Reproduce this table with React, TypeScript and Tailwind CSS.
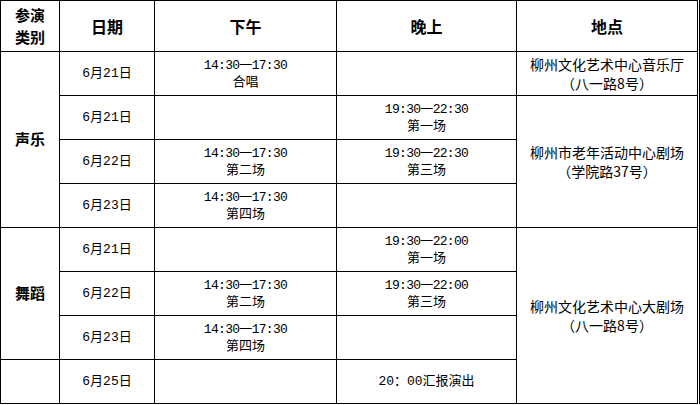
import React from "react";

const cjk = "font-['Liberation_Mono','Noto_Sans_CJK_SC',sans-serif]";

type Row = {
  group?: { label: string; span: number } | "empty";
  date: string;
  afternoon?: string[];
  evening?: string[];
  place?: { lines: string[]; span: number };
};

const rows: Row[] = [
  {
    group: { label: "声乐", span: 4 },
    date: "6月21日",
    afternoon: ["14:30一17:30", "合唱"],
    place: { lines: ["柳州文化艺术中心音乐厅", "（八一路8号）"], span: 1 },
  },
  {
    date: "6月21日",
    evening: ["19:30一22:30", "第一场"],
    place: { lines: ["柳州市老年活动中心剧场", "（学院路37号）"], span: 3 },
  },
  {
    date: "6月22日",
    afternoon: ["14:30一17:30", "第二场"],
    evening: ["19:30一22:30", "第三场"],
  },
  {
    date: "6月23日",
    afternoon: ["14:30一17:30", "第四场"],
  },
  {
    group: { label: "舞蹈", span: 3 },
    date: "6月21日",
    evening: ["19:30一22:00", "第一场"],
    place: { lines: ["柳州文化艺术中心大剧场", "（八一路8号）"], span: 4 },
  },
  {
    date: "6月22日",
    afternoon: ["14:30一17:30", "第二场"],
    evening: ["19:30一22:00", "第三场"],
  },
  {
    date: "6月23日",
    afternoon: ["14:30一17:30", "第四场"],
  },
  {
    group: "empty",
    date: "6月25日",
    evening: ["20：00汇报演出"],
  },
];

const cell = "border border-black text-center align-middle p-0";

// time lines get squeezed a bit, the mono digits run wider than the original
const Lines = ({ lines }: { lines?: string[] }) =>
  lines ? (
    <div className="leading-[17px]">
      {lines.map((l, i) => (
        <div key={l} className={i === 0 && l.includes(":") ? "tracking-[-0.7px]" : ""}>
          {l}
        </div>
      ))}
    </div>
  ) : null;

export default function App() {
  return (
    <div className={`w-[700px] h-[405px] bg-white overflow-hidden text-black ${cjk}`}>
      <div className="inline-block border-r border-black pr-[1px]">
        <table className="table-fixed border-collapse w-[697px]">
          <colgroup>
            <col className="w-[59px]" />
            <col className="w-[95px]" />
            <col className="w-[182px]" />
            <col className="w-[180px]" />
            <col className="w-[181px]" />
          </colgroup>
          <thead>
            <tr className="h-[51px] text-[16px] font-bold font-['Noto_Sans_CJK_SC',sans-serif]">
              <th className={cell}>
                <div className="text-[15px] leading-[22px]">
                  <div>参演</div>
                  <div>类别</div>
                </div>
              </th>
              <th className={cell}>日期</th>
              <th className={cell}>下午</th>
              <th className={cell}>晚上</th>
              <th className={cell}>地点</th>
            </tr>
          </thead>
          <tbody className="text-[13px]">
            {rows.map((r, i) => (
              <tr key={i} className="h-[44px]">
                {r.group === "empty" ? (
                  <td className={cell}></td>
                ) : r.group ? (
                  <td
                    rowSpan={r.group.span}
                    className={`${cell} text-[15px] font-bold font-['Noto_Sans_CJK_SC',sans-serif]`}
                  >
                    {r.group.label}
                  </td>
                ) : null}
                <td className={cell}>{r.date}</td>
                <td className={cell}>
                  <Lines lines={r.afternoon} />
                </td>
                <td className={cell}>
                  <Lines lines={r.evening} />
                </td>
                {r.place && (
                  <td rowSpan={r.place.span} className={`${cell} text-[14px]`}>
                    <div className="leading-[19px] font-['Noto_Sans_CJK_SC',sans-serif]">
                      {r.place.lines.map((l) => (
                        <div key={l}>{l}</div>
                      ))}
                    </div>
                  </td>
                )}
              </tr>
            ))}
          </tbody>
        </table>
      </div>
    </div>
  );
}
